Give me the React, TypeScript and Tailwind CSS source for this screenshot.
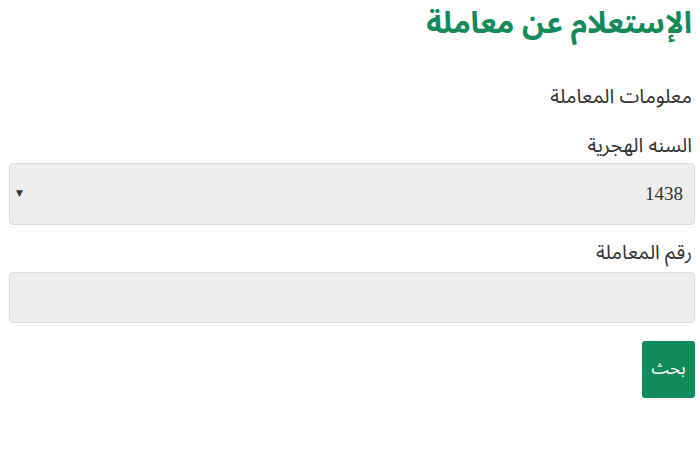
import React from "react";

export default function App() {
  return (
    <div dir="rtl" className="w-[700px] h-[450px] bg-white pl-[9px] pr-[5px] pt-[2px]" style={{ fontFamily: '"Noto Sans Arabic", "DejaVu Sans", sans-serif' }}>
      <h1 className="text-[30px] leading-[44px] font-bold text-[#138a5a] pr-[3px]">الإستعلام عن معاملة</h1>
      <div className="mt-[38px] text-[20px] leading-[26px] text-[#333333] pr-[3px]">معلومات المعاملة</div>
      <div className="mt-[23px] text-[20px] leading-[26px] text-[#333333] pr-[3px]">السنه الهجرية</div>
      <div className="mt-[4px] h-[62px] rounded-[4px] border border-[#dddddd] bg-[#eeeeee] flex items-center justify-between pr-[11px] pl-[6px]">
        <span className="text-[19px] text-[#333333]" style={{ fontFamily: '"Liberation Serif", serif' }}>1438</span>
        <span className="text-[9px] text-[#333333]">▼</span>
      </div>
      <div className="mt-[15px] text-[20px] leading-[26px] text-[#333333] pr-[3px]">رقم المعاملة</div>
      <div className="mt-[6px] h-[51px] rounded-[4px] border border-[#dddddd] bg-[#eeeeee]"></div>
      <div className="mt-[18px] flex">
        <button className="w-[53px] h-[57px] rounded-[3px] bg-[#138a5c] text-white text-[17px]">بحث</button>
      </div>
    </div>
  );
}
